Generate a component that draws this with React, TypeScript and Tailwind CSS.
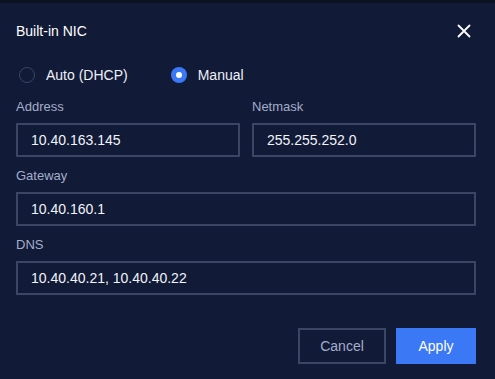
import { useState } from 'react'

type Mode = 'auto' | 'manual'

function Radio({ checked, label, onClick }: { checked: boolean; label: string; onClick: () => void }) {
  return (
    <button onClick={onClick} className="flex items-center h-5 gap-[11px]">
      {checked ? (
        <span className="w-4 h-4 rounded-full bg-[#3b78f6] flex items-center justify-center">
          <span className="w-[6px] h-[6px] rounded-full bg-white" />
        </span>
      ) : (
        <span className="w-4 h-4 rounded-full border border-[#3a4566]" />
      )}
      <span className="text-[14px] leading-5 text-[#eef1f8]">{label}</span>
    </button>
  )
}

function Field({ label, value, className = '' }: { label: string; value: string; className?: string }) {
  return (
    <div className={className}>
      <div className="text-[13px] leading-[18px] text-[#a3aecb]">{label}</div>
      <div className="mt-[7px] h-[34px] border-2 border-[#3a4663] flex items-center pl-[13px] text-[14px] text-[#f2f4fa]">
        {value}
      </div>
    </div>
  )
}

export default function App() {
  const [mode, setMode] = useState<Mode>('manual')

  return (
    <div className="w-[495px] h-[379px] bg-[#111a37] overflow-hidden" style={{ fontFamily: '"Liberation Sans", Arial, sans-serif' }}>
      <div className="h-[3px] bg-[#0c1222]" />

      {/* Header */}
      <div className="mt-[18px] pl-4 pr-[24px] flex items-center justify-between h-5">
        <span className="text-[14px] text-white">Built-in NIC</span>
        <svg width="14" height="14" viewBox="0 0 14 14" className="text-white">
          <path d="M1.5 1.5 L12.5 12.5 M12.5 1.5 L1.5 12.5" stroke="currentColor" strokeWidth="1.8" strokeLinecap="round" />
        </svg>
      </div>

      {/* Mode */}
      <div className="mt-6 pl-[19px] flex gap-[43px]">
        <Radio checked={mode === 'auto'} label="Auto (DHCP)" onClick={() => setMode('auto')} />
        <Radio checked={mode === 'manual'} label="Manual" onClick={() => setMode('manual')} />
      </div>

      <div className="pl-4 pr-[19px]">
        <div className="mt-[13px] grid grid-cols-2 gap-3">
          <Field label="Address" value="10.40.163.145" />
          <Field label="Netmask" value="255.255.252.0" />
        </div>
        <Field className="mt-[10px]" label="Gateway" value="10.40.160.1" />
        <Field className="mt-[10px]" label="DNS" value="10.40.40.21, 10.40.40.22" />

        <div className="mt-[33px] flex justify-end gap-[10px]">
          <button className="w-[88px] h-9 border-2 border-[#3a4663] text-[14px] text-[#a3aecb]">Cancel</button>
          <button className="w-20 h-9 bg-[#3b78f6] text-[14px] text-white">Apply</button>
        </div>
      </div>
    </div>
  )
}
